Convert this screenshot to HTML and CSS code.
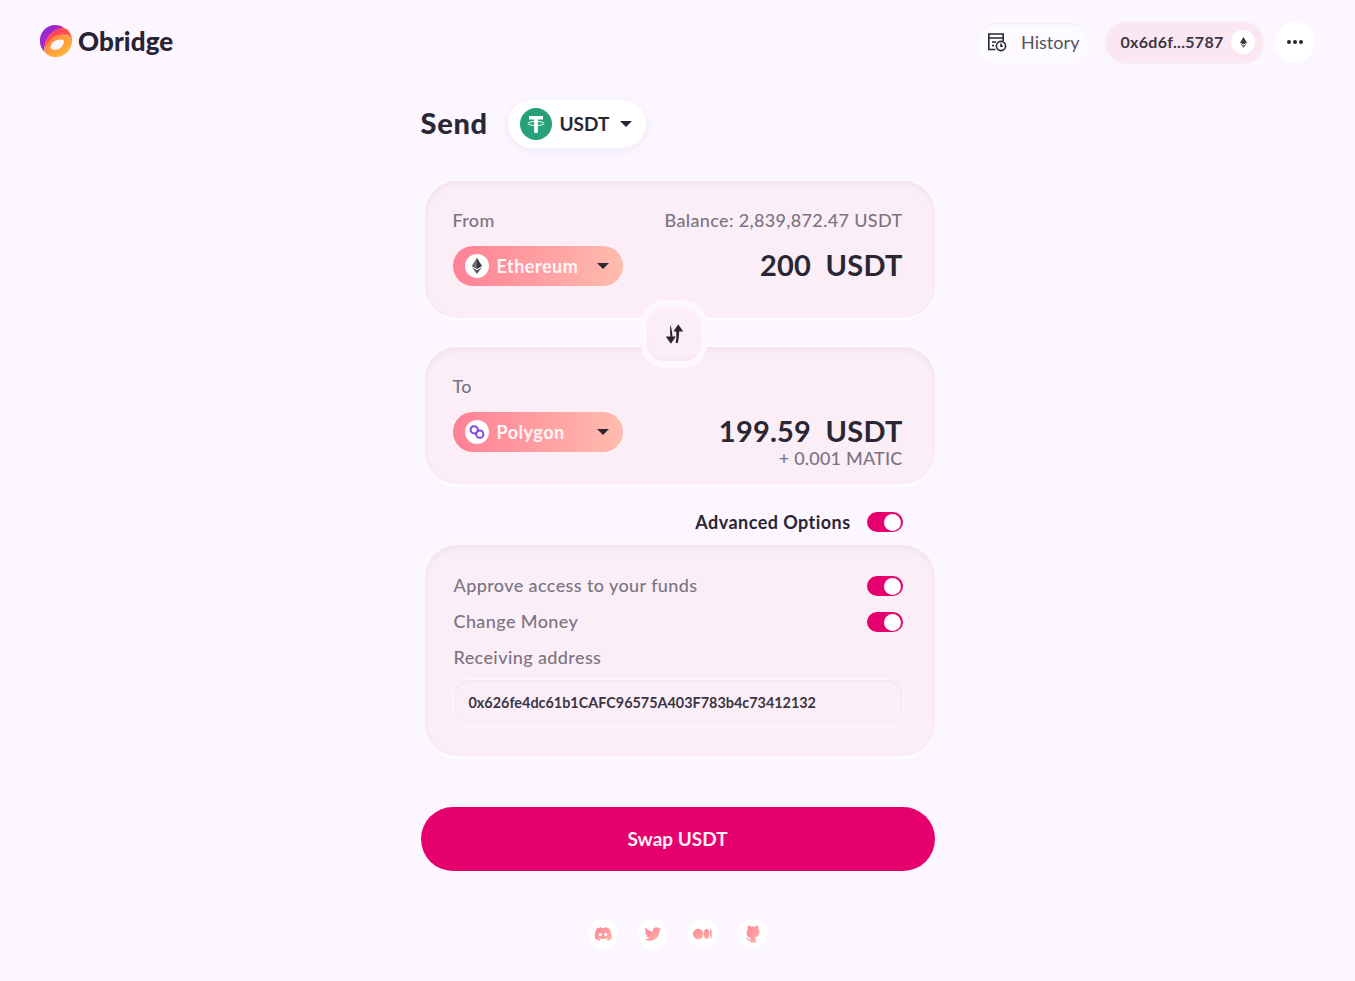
FILE: index.html
```html
<!DOCTYPE html>
<html lang="en">
<head>
<meta charset="utf-8">
<title>Obridge</title>
<link rel="stylesheet" href="styles.css">
</head>
<body>
<svg class="defs" width="0" height="0" aria-hidden="true">
  <defs>
    <linearGradient id="soc" x1="0" y1="0" x2="1" y2="1"><stop offset="0" stop-color="#ff7f95"/><stop offset="1" stop-color="#ffb8aa"/></linearGradient>
    <linearGradient id="lg1" x1="0" y1="0" x2="1" y2="1"><stop offset="0" stop-color="#7a2cf0"/><stop offset="1" stop-color="#f0207a"/></linearGradient>
    <linearGradient id="lg2" x1="0" y1="0" x2="1" y2="1"><stop offset="0" stop-color="#ff2d6d"/><stop offset="1" stop-color="#ff7a2d"/></linearGradient>
    <linearGradient id="lg3" x1="0" y1="0" x2="1" y2="1"><stop offset="0" stop-color="#ff7a3d"/><stop offset="1" stop-color="#ffc23d"/></linearGradient>
  </defs>
</svg>
<header class="header">
  <div class="brand">
    <svg class="brand-mark" viewBox="0 0 32 32" width="32" height="32">
      <path d="M0 17C-1 8 6 0 15 0c4 0 7 1 9 3C15 4 8 9 5 19c-.5 2-1 5-.5 8C2 24 0 21 0 17z" fill="url(#lg1)"/>
      <path d="M5 20C7 11 14 3 24 3c4 1 7 5 8 10-3-3-7-4-12-3-5 1-9 4-11 9l-4 7c-.5-2-.5-4 0-6z" fill="url(#lg2)"/>
      <path fill-rule="evenodd" d="M32 13c1 10-6 19-16 19-5 0-10-2-11.500-6 1-8 8-16 15.500-16 5 0 10 0 12 3zM10.500 23c2 2.500 7 2.500 10.500-.5 2.500-2 3.500-5.500 2.500-7.500-3.500-1-7 0-9.500 1.500-2.500 1.500-3.500 4-3.500 6.500z" fill="url(#lg3)"/>
    </svg>
    <span class="brand-name">Obridge</span>
  </div>
  <nav class="nav">
    <button class="history">
      <svg viewBox="0 0 20 20" width="20" height="20" fill="none" stroke="#2a2735" stroke-width="1.600">
        <path d="M8.500 17.500H1.800V2h14.400v7"/>
        <path d="M1.800 6h14.400M5 10h4M5 13.500h2"/>
        <circle cx="14" cy="14" r="4.600"/>
        <path d="M14 11.500v2.700h2"/>
      </svg>
      <span>History</span>
    </button>
    <button class="wallet">
      <span>0x6d6f...5787</span>
      <span class="wallet-coin">
        <svg viewBox="0 0 10 16" width="7" height="11"><path d="M5 0l5 8-5 3-5-3z" fill="#3c3c46"/><path d="M5 12.200l5-3-5 6.800-5-6.800z" fill="#6b6b75"/></svg>
      </span>
    </button>
    <button class="more" aria-label="More"><i></i><i></i><i></i></button>
  </nav>
</header>
<main class="main">
  <div class="send-row">
    <h1 class="send-title">Send</h1>
    <button class="token">
      <svg viewBox="0 0 32 32" width="32" height="32">
        <circle cx="16" cy="16" r="16" fill="#26a17b"/>
        <path d="M9 8h14v3.400h-5.200V25h-3.600V11.400H9z" fill="#fff"/>
        <ellipse cx="16" cy="15.500" rx="8" ry="2" fill="none" stroke="#fff" stroke-width="1"/>
      </svg>
      <span class="token-name">USDT</span>
      <i class="caret"></i>
    </button>
  </div>

  <div class="exchange">
    <section class="card">
      <div class="line">
        <span class="label">From</span>
        <span class="label">Balance: 2,839,872.47 USDT</span>
      </div>
      <div class="line line-pill">
        <button class="chain">
          <span class="chain-icon">
            <svg viewBox="0 0 10 16" width="10" height="16"><path d="M5 0l5 8-5 3-5-3z" fill="#33333d"/><path d="M5 0v11l-5-3z" fill="#6b6b75"/><path d="M5 12.200l5-3-5 6.800-5-6.800z" fill="#55555f"/></svg>
          </span>
          <span class="chain-name">Ethereum</span>
          <i class="caret"></i>
        </button>
        <span class="amount">200&nbsp; USDT</span>
      </div>
    </section>
    <div class="switch-wrap">
      <button class="switch" aria-label="Switch">
        <svg viewBox="0 0 18 18" width="22" height="22" fill="#2a2735">
          <path d="M6 1.500c-.3 3-.3 7 0 9.500H2.200L6.500 17l4-6H7.800C7.500 8 7 4 6 1.500z"/>
          <path d="M12 16.500c.8-2.500 1.200-6.500 1.200-9.500H16.500L12.500 1 8.500 7h2.300c.2 3 .2 6.500-.5 9 .5.300 1.200.500 1.700.500z"/>
        </svg>
      </button>
    </div>
    <section class="card card-to">
      <div class="line">
        <span class="label">To</span>
      </div>
      <div class="line line-pill">
        <button class="chain">
          <span class="chain-icon">
            <svg viewBox="0 0 18 18" width="18" height="18" fill="none" stroke="#8247e5" stroke-width="2"><circle cx="6.200" cy="6.800" r="3.600"/><circle cx="11.800" cy="11.200" r="3.600"/></svg>
          </span>
          <span class="chain-name">Polygon</span>
          <i class="caret"></i>
        </button>
        <span class="amount">199.59&nbsp; USDT</span>
      </div>
      <div class="extra">+ 0.001 MATIC</div>
    </section>
  </div>

  <div class="adv-row">
    <span class="adv-label">Advanced Options</span>
    <span class="toggle"></span>
  </div>

  <section class="card card-adv">
    <div class="opt"><span class="label">Approve access to your funds</span><span class="toggle"></span></div>
    <div class="opt"><span class="label">Change Money</span><span class="toggle"></span></div>
    <div class="opt"><span class="label">Receiving address</span></div>
    <div class="address">0x626fe4dc61b1CAFC96575A403F783b4c73412132</div>
  </section>

  <button class="swap">Swap USDT</button>

  <footer class="social">
    <a class="soc">
      <svg viewBox="0 0 18 14" width="18" height="14"><path fill="url(#soc)" fill-rule="evenodd" d="M3 1.500C5 .5 6.500.2 7 .2l.4.8h3.200l.4-.8c.5 0 2 .3 4 1.300 1.800 3 2.800 6.500 2.800 10.200-1.300 1.100-2.800 1.800-4.200 2l-1-1.500 1.400-.7-.5-.3c-2.500 1.200-5.500 1.200-8 0l-.5.300 1.400.7-1 1.500c-1.400-.2-2.900-.9-4.200-2C.200 8 1.200 4.500 3 1.500zM6.300 6c-.9 0-1.500.7-1.500 1.600s.6 1.600 1.500 1.600 1.500-.7 1.500-1.600S7.200 6 6.300 6zm5.400 0c-.9 0-1.500.7-1.500 1.600s.6 1.600 1.500 1.600 1.500-.7 1.500-1.600S12.600 6 11.700 6z"/></svg>
    </a>
    <a class="soc">
      <svg viewBox="0 0 24 24" width="18" height="18"><path fill="url(#soc)" d="M23 5c-.8.400-1.700.600-2.600.800.900-.600 1.700-1.500 2-2.500-.900.500-1.800.900-2.900 1.100A4.600 4.600 0 0 0 11.700 8.500C7.900 8.300 4.500 6.500 2.200 3.700c-1.200 2.100-.6 4.800 1.400 6.100-.7 0-1.400-.2-2-.6 0 2.200 1.600 4.100 3.700 4.600-.7.200-1.400.2-2.100.1.600 1.800 2.300 3.100 4.300 3.200A9.200 9.200 0 0 1 .8 19c2 1.300 4.500 2 7 2 8.500 0 13.300-7.200 13-13.600.9-.6 1.700-1.400 2.200-2.400z"/></svg>
    </a>
    <a class="soc">
      <svg viewBox="0 0 20 12" width="19" height="12"><ellipse cx="5.600" cy="6" rx="5.600" ry="5.600" fill="url(#soc)"/><ellipse cx="14.400" cy="6" rx="2.800" ry="5.200" fill="url(#soc)"/><ellipse cx="18.800" cy="6" rx="1" ry="4.700" fill="url(#soc)"/></svg>
    </a>
    <a class="soc">
      <svg viewBox="0 0 16 18" width="16" height="18"><path fill="url(#soc)" d="M3 .500c1 0 2.300.6 3.200 1.300a9 9 0 0 1 3.600 0C10.700 1.100 12 .5 13 .5c.4 1 .5 2 .2 3 .8.900 1.300 2 1.300 3.300 0 3.700-2 5-4.500 5.400.6.500.8 1.300.8 2.300v3H5.500v-1.800c-2.300.4-3-.8-3.500-1.800-.3-.6-.8-1-1.300-1.300.7-.3 1.500.1 2 .9.600 1 1.500 1.200 2.800.9 0-.600.3-1 .6-1.200-2.500-.4-4.500-1.700-4.500-5.400 0-1.300.5-2.400 1.300-3.300-.3-1-.2-2 .1-3z"/></svg>
    </a>
  </footer>
</main>
</body>
</html>
```
FILE: styles.css
```css
* { box-sizing: border-box; }
html, body { margin: 0; padding: 0; }
body {
  min-height: 981px;
  background: #fbf6ff;
  color: #2a2735;
  font-family: "Lato", "Noto Sans", sans-serif;
  overflow: hidden;
}
.defs { position: absolute; }
button { font-family: inherit; border: 0; padding: 0; background: none; color: inherit; }

.header {
  height: 84px;
  padding: 22px 40px 0;
  display: flex;
  justify-content: space-between;
  align-items: flex-start;
}
.brand { display: flex; align-items: center; gap: 6px; height: 40px; }
.brand-mark { margin-top: -2px; overflow: visible; }
.brand-name { font: 900 26px/38px "Lato", sans-serif; color: #272334; letter-spacing: .1px; padding-bottom: 2px; }
.nav { display: flex; align-items: center; gap: 16px; }
.nav .more { margin-left: -4px; }
.history {
  width: 114px; height: 40px; border-radius: 20px;
  display: flex; align-items: center; gap: 14px; padding: 0 0 1px 11px;
  font-size: 18px; color: #55515f; letter-spacing: .05px;
  background: #fdfbff;
  box-shadow: inset 0 2px 3px #f1edf4, 0 0 0 1px #fdfcff;
}
.wallet {
  width: 157px; height: 40px; border-radius: 20px;
  display: flex; align-items: center; justify-content: space-between; padding: 0 8px 0 14.500px;
  font-size: 16px; font-weight: 700; color: #3a3644; letter-spacing: .3px;
  background: #fbe7f2;
  box-shadow: 0 1px 3px #f1e3ee;
}
.wallet > span:first-child { padding-bottom: 2px; }
.wallet-coin {
  width: 24px; height: 24px; border-radius: 50%; background: #fff;
  display: flex; align-items: center; justify-content: center;
}
.more {
  width: 40px; height: 40px; border-radius: 50%; background: #fff;
  display: flex; align-items: center; justify-content: center; gap: 2px;
}
.more i { width: 4px; height: 4px; border-radius: 50%; background: #2a2735; }

.main { width: 514px; margin: 0 auto; padding-top: 16px; }
.send-row { display: flex; align-items: center; gap: 21px; height: 48px; }
.send-title { margin: 0; width: 66px; white-space: nowrap; font-size: 29px; font-weight: 900; letter-spacing: .7px; color: #2a2735; line-height: 46px; padding-bottom: 2px; }
.token {
  width: 138px; height: 48px; border-radius: 24px; background: #fff;
  display: flex; align-items: center; padding-left: 12px; gap: 8px;
  font-size: 19px; font-weight: 700; color: #2a2735;
  box-shadow: 0 2px 8px #efe7f3;
}
.token-name { padding-bottom: 2px; }
.token .caret { margin-left: 3px; }
.caret {
  display: block; width: 0; height: 0;
  border-left: 6px solid transparent; border-right: 6px solid transparent;
  border-top: 6px solid #2a2735;
}

.exchange { margin-top: 33px; position: relative; }
.card {
  margin-left: 4px;
  height: 137px;
  padding: 27px 32px 0 28px;
  border-radius: 32px;
  background: #fceef7;
  box-shadow: inset 0 4px 5px #f3e5ee, inset 3px 0 4px #f9ebf4, 0 2px 2px #fffcff, 0 0 0 2px #fdf9fe;
}
.card-to { margin-top: 29px; }
.line { display: flex; justify-content: space-between; align-items: center; height: 24px; }
.label { font-size: 18px; font-weight: 500; color: #7a7482; line-height: 24px; letter-spacing: .35px; }
.line-pill { height: 40px; margin-top: 14px; }
.chain {
  width: 170px; height: 40px; border-radius: 20px;
  background: linear-gradient(90deg, #ff8095, #ffbcae);
  display: flex; align-items: center; padding-left: 12px;
  font-size: 18px; font-weight: 700; color: #fff6f8; letter-spacing: .5px;
}
.chain-icon {
  width: 24px; height: 24px; border-radius: 50%; background: #fff; flex: none;
  display: flex; align-items: center; justify-content: center;
}
.chain-name { margin-left: 8px; flex: 1; text-align: left; padding-bottom: 1px; }
.chain .caret { margin-right: 14px; }
.amount { font-size: 29px; font-weight: 700; letter-spacing: .2px; color: #2a2735; line-height: 38px; padding-bottom: 2px; }
.extra { text-align: right; font-size: 18px; font-weight: 500; letter-spacing: .2px; color: #7a7482; line-height: 22px; margin-top: -5px; }

.switch-wrap {
  position: absolute; left: 220.500px; top: 119px;
  width: 66px; height: 68px; border-radius: 24px;
  background: #fdf8fd; display: flex; align-items: center; justify-content: center;
}
.switch {
  width: 54px; height: 54px; border-radius: 18px;
  background: #fceef7;
  box-shadow: inset 0 -2px 3px #f5e5ee, inset 0 2px 3px #fff4fa;
  display: flex; align-items: center; justify-content: center;
}

.adv-row {
  margin-top: 26px; height: 24px; padding-right: 32px;
  display: flex; justify-content: flex-end; align-items: center; gap: 16px;
}
.adv-label { font-size: 18px; font-weight: 700; letter-spacing: .45px; color: #2a2735; padding-bottom: 1px; }
.toggle {
  width: 36px; height: 20px; border-radius: 10px; background: #e6006e;
  position: relative; display: block; flex: none;
}
.toggle::after {
  content: ""; position: absolute; right: 1.500px; top: 1.500px;
  width: 17px; height: 17px; border-radius: 50%; background: #fff;
}

.card-adv { height: 211px; margin-top: 11px; padding-top: 23px; }
.opt { display: flex; justify-content: space-between; align-items: center; height: 36px; }
.opt .label { margin-left: 1px; padding-bottom: 2px; letter-spacing: .4px; }
.address {
  margin-top: 4px; height: 46px; width: 449px; padding-left: 15px; margin-left: 1px;
  border-radius: 14px; background: #fceef7;
  box-shadow: inset 0 2px 3px #f3e5ee, 0 1px 0 #fff8fc, 0 0 0 1px #fff7fc;
  font-size: 14.400px; font-weight: 700; color: #3a3644; line-height: 45px;
}

.swap {
  display: block; width: 514px; height: 64px; margin-top: 51px; padding-bottom: 2px;
  border-radius: 32px; background: #e6006e; color: #fdf0f6;
  font-size: 19px; font-weight: 700;
}

.social { margin-top: 48px; display: flex; justify-content: center; gap: 20px; }
.soc {
  width: 30px; height: 30px; border-radius: 50%; background: #fff;
  display: flex; align-items: center; justify-content: center;
}
```
